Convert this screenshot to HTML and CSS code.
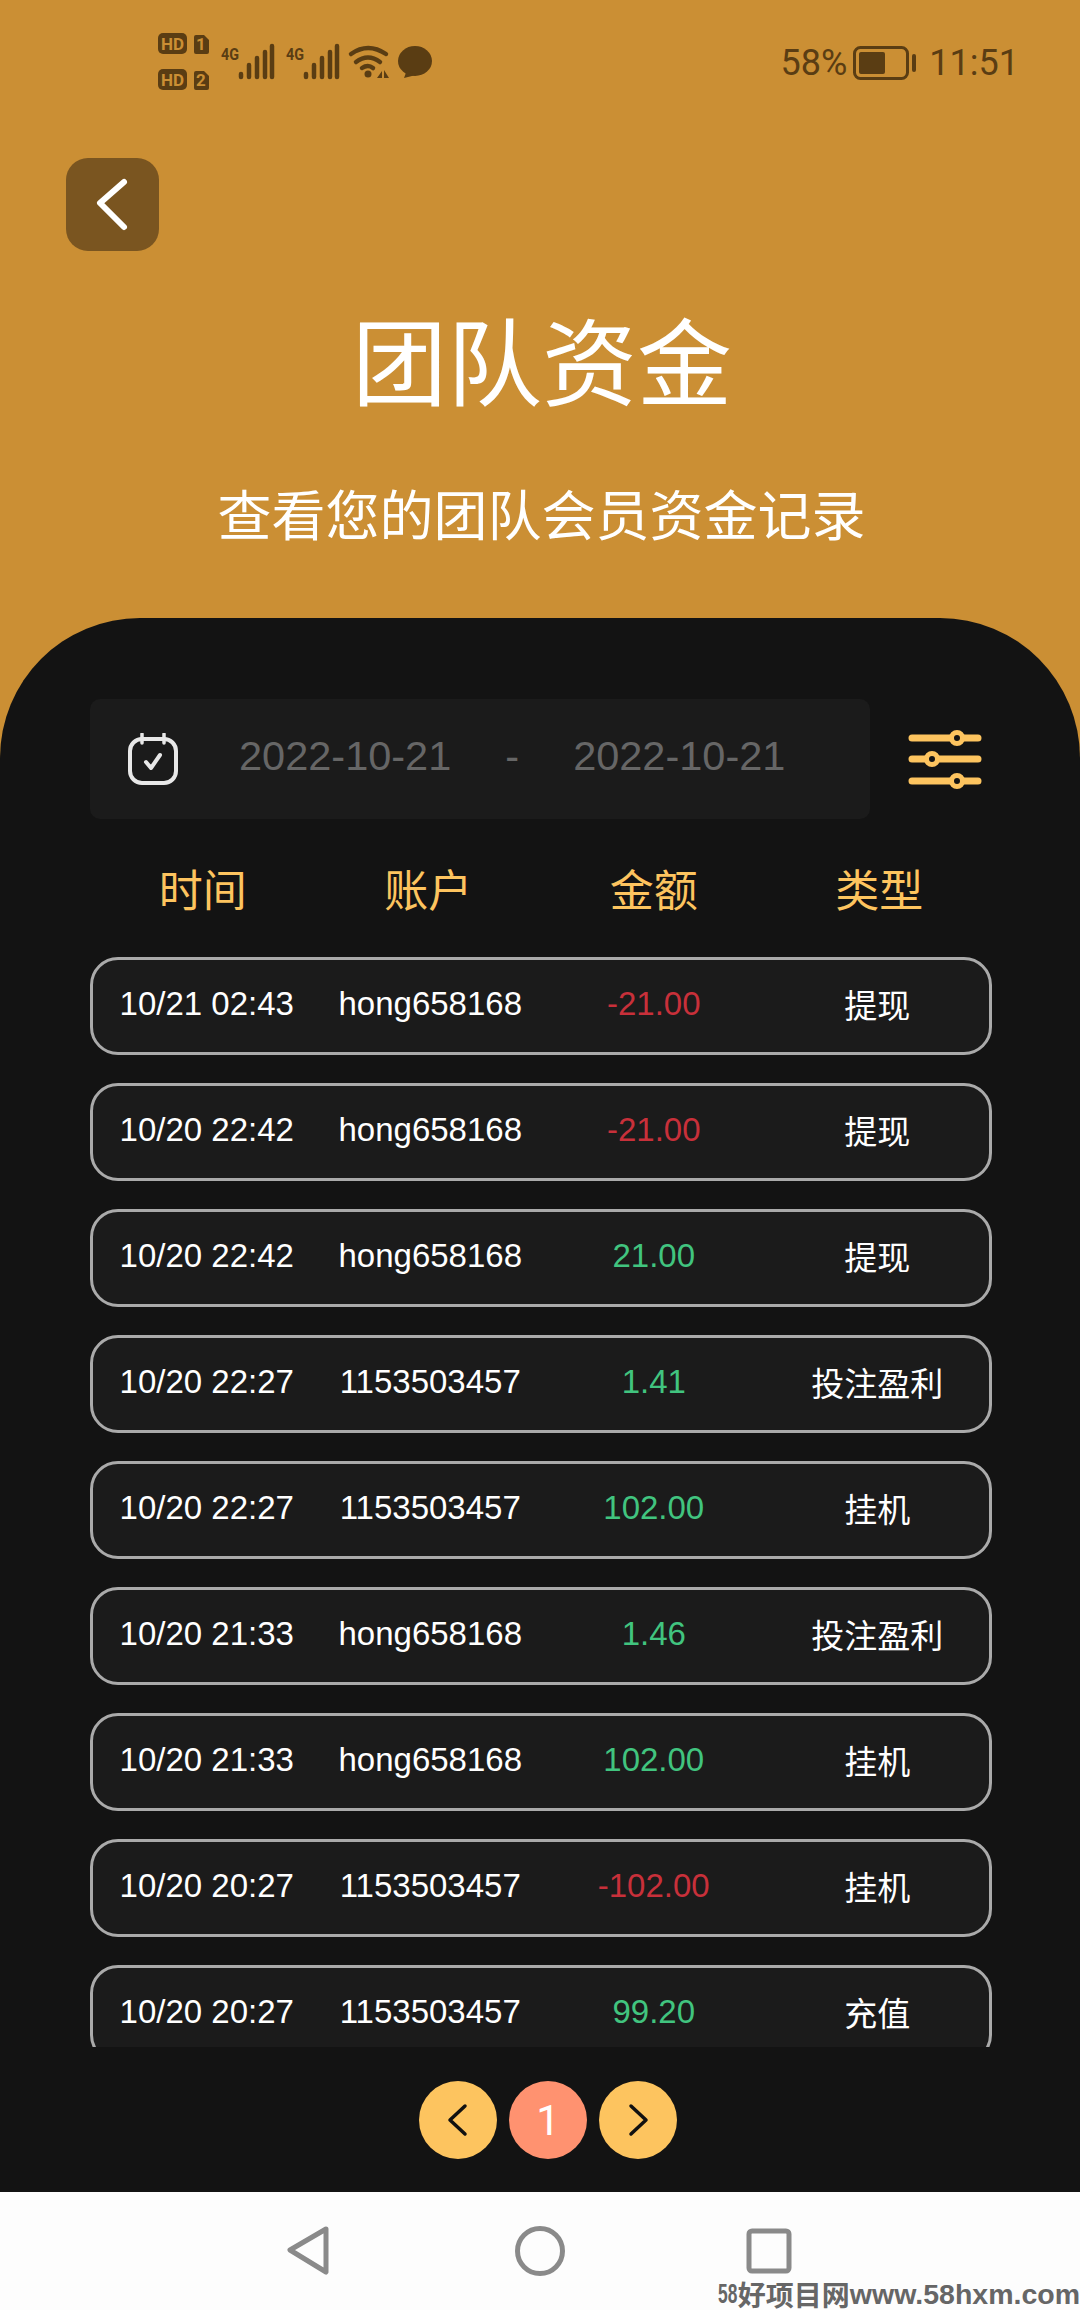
FILE: index.html
```html
<!DOCTYPE html>
<html lang="zh-CN">
<head>
    <meta charset="UTF-8">
    <title>团队资金</title>
    <link rel="stylesheet" href="styles.css">
</head>
<body>
    <div class="page">
        <div class="header">
            <div class="status-bar">
                <svg class="status-icons" width="330" height="110" viewBox="130 0 330 110">
                    <rect x="158" y="33" width="29" height="21" rx="5" fill="#5a3d13"/>
                    <text x="172.500" y="49.500" class="hd-text" text-anchor="middle">HD</text>
                    <path d="M196 35h8l5 5v12a2 2 0 0 1-2 2h-11a2 2 0 0 1-2-2v-15a2 2 0 0 1 2-2z" fill="#5a3d13"/>
                    <text x="201" y="50" class="hd-text" text-anchor="middle">1</text>
                    <rect x="158" y="69" width="29" height="21" rx="5" fill="#5a3d13"/>
                    <text x="172.500" y="85.500" class="hd-text" text-anchor="middle">HD</text>
                    <path d="M196 71h8l5 5v12a2 2 0 0 1-2 2h-11a2 2 0 0 1-2-2v-15a2 2 0 0 1 2-2z" fill="#5a3d13"/>
                    <text x="201" y="86" class="hd-text" text-anchor="middle">2</text>

                    <text x="221" y="60" class="net-text" textLength="18" lengthAdjust="spacingAndGlyphs">4G</text>
                    <path class="bars" d="M241 74v3M249 65v12M257 58v19M265 52v25M272 46v31"/>
                    <text x="286" y="60" class="net-text" textLength="18" lengthAdjust="spacingAndGlyphs">4G</text>
                    <path class="bars" d="M306 74v3M314 65v12M322 58v19M330 52v25M337 46v31"/>

                    <path class="wifi" d="M351 54q17-12 35 0M356 62q12-9 24 0M362 68q6-4 11 0"/>
                    <circle cx="368" cy="74" r="3.500" fill="#5a3d13"/>
                    <path d="M377 78l5-7v7zM384 70l5 8h-5z" fill="#5a3d13"/>

                    <ellipse cx="415" cy="61" rx="17" ry="15" fill="#5a3d13"/>
                    <path d="M407 70l-3 8 12-3z" fill="#5a3d13"/>
                </svg>
                <div class="status-right">
                    <span>58%</span>
                    <svg class="battery" width="64" height="34" viewBox="0 0 64 34">
                        <rect x="1.500" y="1.500" width="53" height="31" rx="6" fill="none" stroke="#5a3d13" stroke-width="3"/>
                        <rect x="6" y="6" width="26" height="22" rx="2" fill="#5a3d13"/>
                        <rect x="59" y="8" width="4" height="18" rx="2" fill="#5a3d13"/>
                    </svg>
                    <span class="clock">11:51</span>
                </div>
            </div>
            <div class="back-btn">
                <svg width="93" height="93" viewBox="0 0 93 93">
                    <path d="M58 24L34 45l24 24" fill="none" stroke="#fff" stroke-width="6" stroke-linecap="round" stroke-linejoin="round"/>
                </svg>
            </div>
            <h1 class="title">团队资金</h1>
            <p class="subtitle">查看您的团队会员资金记录</p>
        </div>

        <div class="sheet">
            <div class="filter-row">
                <div class="date-box">
                    <svg class="calendar" width="50" height="52" viewBox="0 0 50 52">
                        <rect x="2" y="6" width="46" height="44" rx="12" fill="none" stroke="#e8e8e8" stroke-width="4"/>
                        <path d="M14 1v9M36 1v9" stroke="#e8e8e8" stroke-width="3.500" stroke-linecap="round"/>
                        <path d="M18 29l5 6 9-13" fill="none" stroke="#e8e8e8" stroke-width="4" stroke-linecap="round" stroke-linejoin="round"/>
                    </svg>
                    <span class="date">2022-10-21</span>
                    <span class="date date-sep">-</span>
                    <span class="date">2022-10-21</span>
                </div>
                <svg class="filter-icon" width="74" height="64" viewBox="0 0 74 64">
                    <path d="M4 11h66M4 32h66M4 54h66" stroke="#fdc45f" stroke-width="7" stroke-linecap="round"/>
                    <circle cx="49" cy="11" r="5.500" fill="#131313" stroke="#fdc45f" stroke-width="5"/>
                    <circle cx="24" cy="32" r="5.500" fill="#131313" stroke="#fdc45f" stroke-width="5"/>
                    <circle cx="49" cy="54" r="5.500" fill="#131313" stroke="#fdc45f" stroke-width="5"/>
                </svg>
            </div>

            <div class="table-head">
                <span>时间</span>
                <span>账户</span>
                <span>金额</span>
                <span>类型</span>
            </div>

            <div class="record-list">
                <div class="record"><span>10/21 02:43</span><span>hong658168</span><span class="out">-21.00</span><span>提现</span></div>
                <div class="record"><span>10/20 22:42</span><span>hong658168</span><span class="out">-21.00</span><span>提现</span></div>
                <div class="record"><span>10/20 22:42</span><span>hong658168</span><span class="in">21.00</span><span>提现</span></div>
                <div class="record"><span>10/20 22:27</span><span>1153503457</span><span class="in">1.41</span><span>投注盈利</span></div>
                <div class="record"><span>10/20 22:27</span><span>1153503457</span><span class="in">102.00</span><span>挂机</span></div>
                <div class="record"><span>10/20 21:33</span><span>hong658168</span><span class="in">1.46</span><span>投注盈利</span></div>
                <div class="record"><span>10/20 21:33</span><span>hong658168</span><span class="in">102.00</span><span>挂机</span></div>
                <div class="record"><span>10/20 20:27</span><span>1153503457</span><span class="out">-102.00</span><span>挂机</span></div>
                <div class="record"><span>10/20 20:27</span><span>1153503457</span><span class="in">99.20</span><span>充值</span></div>
            </div>

            <div class="pager">
                <div class="pager-btn">
                    <svg width="30" height="34" viewBox="0 0 30 34"><path d="M22 3L7 17l15 14" fill="none" stroke="#111" stroke-width="3.500" stroke-linecap="round" stroke-linejoin="round"/></svg>
                </div>
                <div class="pager-btn current">1</div>
                <div class="pager-btn">
                    <svg width="30" height="34" viewBox="0 0 30 34"><path d="M8 3l15 14L8 31" fill="none" stroke="#111" stroke-width="3.500" stroke-linecap="round" stroke-linejoin="round"/></svg>
                </div>
            </div>
        </div>

        <div class="nav-bar">
            <svg width="44" height="52" viewBox="0 0 44 52"><path d="M40 4L4 25l36 22z" fill="none" stroke="#8a8a8a" stroke-width="5" stroke-linejoin="round"/></svg>
            <svg class="nav-home" width="50" height="50" viewBox="0 0 50 50"><circle cx="25" cy="25" r="22.500" fill="none" stroke="#8a8a8a" stroke-width="5"/></svg>
            <svg width="46" height="46" viewBox="0 0 46 46"><rect x="3" y="3" width="40" height="40" rx="3" fill="none" stroke="#8a8a8a" stroke-width="5"/></svg>
            <div class="watermark"><span class="wm-num">58</span><span class="wm-cn">好项目网</span>www.58hxm.com</div>
        </div>
    </div>
</body>
</html>
```
FILE: styles.css
```css
* { box-sizing: border-box; }
html, body { margin: 0; padding: 0; }
body { background: #cb8f34; font-family: "Liberation Sans", "Noto Sans CJK SC", sans-serif; color: #fff; }
.page { width: 1080px; height: 2310px; display: flex; flex-direction: column; overflow: hidden; }

.header { height: 618px; flex: none; }
.status-bar { height: 110px; padding: 0 61px 0 130px; display: flex; justify-content: space-between; align-items: center; }
.status-icons { display: block; }
.hd-text { font: bold 17px "Roboto", sans-serif; fill: #cb8f34; }
.net-text { font: bold 17px "Roboto", sans-serif; fill: #5a3d13; }
.bars { fill: none; stroke: #5a3d13; stroke-width: 4.500; stroke-linecap: round; }
.wifi { fill: none; stroke: #5a3d13; stroke-width: 4.500; stroke-linecap: round; }
.status-right { display: flex; align-items: center; font: 36px "Roboto", sans-serif; color: #5a3d13; margin-top: 16px; }
.battery { margin-left: 6px; display: block; }
.clock { margin-left: 12px; }

.back-btn { width: 93px; height: 93px; margin: 48px 0 0 66px; background: #7a5520; border-radius: 22px; }
.back-btn svg { display: block; }
.title { margin: 60px 0 0; padding-left: 4px; text-align: center; font-size: 95px; line-height: 110px; font-weight: 400; }
.subtitle { margin: 63px 0 0; padding-left: 3px; text-align: center; font-size: 54px; line-height: 66px; }

.sheet { flex: 1; background: #131313; border-radius: 140px 140px 0 0; padding: 81px 88px 0 90px; display: flex; flex-direction: column; }
.filter-row { display: flex; align-items: center; height: 120px; flex: none; }
.date-box { width: 780px; height: 120px; background: #1b1b1b; border-radius: 10px; display: flex; align-items: center; padding-left: 38px; font-size: 41.500px; color: #666; }
.date { margin-bottom: 6px; }
.calendar { display: block; margin-right: 61px; }
.date-sep { margin-left: 54px; margin-right: 54px; }
.filter-icon { display: block; margin-left: 38px; }

.table-head { margin-top: 37px; height: 60px; display: grid; grid-template-columns: repeat(4, 1fr); align-items: center; text-align: center; font-size: 44px; color: #fdc45f; flex: none; }
.record-list { margin-top: 41px; height: 1090px; overflow: hidden; flex: none; }
.record { height: 98px; margin-bottom: 28px; padding: 0 0 5px 2px; display: grid; grid-template-columns: repeat(4, 1fr); align-items: center; text-align: center; background: #1b1b1b; border: 3px solid #aaa; border-radius: 28px; font-size: 33px; }
.out { color: #c8303a; }
.in { color: #41c47f; }

.pager { margin-top: 34px; padding-left: 14px; display: flex; justify-content: center; gap: 12px; }
.pager-btn { width: 78px; height: 78px; border-radius: 50%; background: #fdc45f; display: flex; align-items: center; justify-content: center; }
.pager-btn svg { display: block; }
.pager-btn.current { background: #ff9270; font: 42px "Roboto", sans-serif; }

.nav-bar { position: relative; height: 118px; flex: none; background: #fdfdfd; display: flex; align-items: center; padding: 0 288px 0 286px; justify-content: space-between; }
.nav-home { margin-left: 4px; }
.watermark { position: absolute; right: 0; bottom: 0; height: 32px; line-height: 32px; display: flex; font: bold 28.500px/32px "Liberation Sans", sans-serif; color: #666; white-space: nowrap; }
.wm-cn { font: bold 28px/32px "Noto Sans CJK SC", sans-serif; }
.wm-num { width: 20px; font-size: 28px; transform: scaleX(0.62); transform-origin: left center; }
```
